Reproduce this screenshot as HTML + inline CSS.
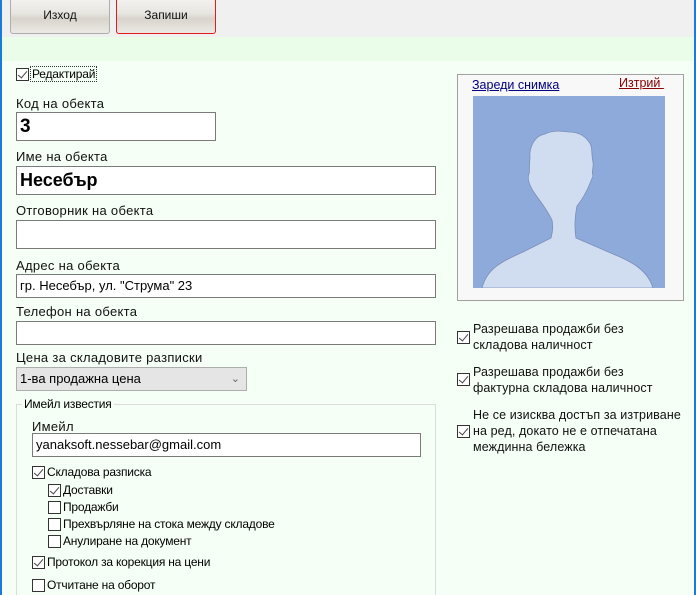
<!DOCTYPE html>
<html><head><meta charset="utf-8"><style>
*{box-sizing:border-box;margin:0;padding:0}
html,body{width:696px;height:595px;overflow:hidden}
body{background:#f5fff5;font-family:"Liberation Sans",sans-serif;font-size:13px;color:#000;position:relative}
.a{position:absolute}
.top{left:0;top:0;width:696px;height:37px;background:#f0f0f0}
.grn{left:0;top:37px;width:696px;height:24px;background:#e9fde9}
.bl{top:0;width:2px;height:595px;background:#1e7ad8}
.btn{top:-4px;height:38px;width:100px;border:1px solid #adadad;border-radius:3px;background:linear-gradient(#f4f3f1,#e8e6e1 45%,#d8d4cc 60%,#ebe9e4);text-align:center;line-height:36px;font-size:12px;color:#111}
.lbl{font-size:13px;color:#111;letter-spacing:.3px}
.in{background:#fff;border:1px solid #7a7a7a;height:29px;padding-left:3px}
.cb{width:13px;height:13px;border:1px solid #333;background:#fff}
.cb.c::after{content:"";position:absolute;left:3px;top:0px;width:4px;height:8px;border:solid #444;border-width:0 1.5px 1.5px 0;transform:rotate(40deg)}
.s{font-size:12px;letter-spacing:-.2px}
.r{font-size:12.5px;color:#111;line-height:16px;letter-spacing:.1px}
</style></head><body>
<div class="a top"></div>
<div class="a grn"></div>
<div class="a bl" style="left:0"></div>
<div class="a bl" style="left:694px"></div>
<div class="a btn" style="left:10px">Изход</div>
<div class="a btn" style="left:116px;border-color:#e31b1b">Запиши</div>

<div class="a cb c" style="left:16px;top:68px"></div>
<div class="a s" style="left:31px;top:67px;outline:1px dotted #333;padding:0 1px">Редактирай</div>

<div class="a lbl" style="left:16px;top:96px">Код на обекта</div>
<div class="a in" style="left:16px;top:112px;width:200px;font-size:19px;font-weight:bold;line-height:27px">3</div>
<div class="a lbl" style="left:16px;top:149px">Име на обекта</div>
<div class="a in" style="left:16px;top:166px;width:420px;font-size:18px;font-weight:bold;line-height:27px">Несебър</div>
<div class="a lbl" style="left:16px;top:203px">Отговорник на обекта</div>
<div class="a in" style="left:16px;top:220px;width:420px"></div>
<div class="a lbl" style="left:16px;top:258px">Адрес на обекта</div>
<div class="a in" style="left:16px;top:274px;width:420px;height:24px;line-height:22px">гр. Несебър, ул. "Струма" 23</div>
<div class="a lbl" style="left:16px;top:304px">Телефон на обекта</div>
<div class="a in" style="left:16px;top:321px;width:420px;height:24px"></div>
<div class="a lbl" style="left:16px;top:350px">Цена за складовите разписки</div>
<div class="a" style="left:16px;top:367px;width:231px;height:24px;background:#e5e5e5;border:1px solid #adadad;padding-left:3px;line-height:22px">1-ва продажна цена<span style="position:absolute;right:6px;top:0;color:#666;font-size:11px">&#8964;</span></div>

<div class="a" style="left:16px;top:404px;width:420px;height:195px;border:1px solid #dcdcdc"></div>
<div class="a s" style="left:22px;top:397px;background:#f5fff5;padding:0 2px">Имейл известия</div>
<div class="a lbl" style="left:32px;top:419px">Имейл</div>
<div class="a in" style="left:32px;top:433px;width:389px;height:24px;line-height:22px">yanaksoft.nessebar@gmail.com</div>
<div class="a cb c" style="left:32px;top:466px"></div><div class="a s" style="left:47px;top:465px">Складова разписка</div>
<div class="a cb c" style="left:48px;top:484px"></div><div class="a s" style="left:63px;top:483px">Доставки</div>
<div class="a cb" style="left:48px;top:501px"></div><div class="a s" style="left:63px;top:500px">Продажби</div>
<div class="a cb" style="left:48px;top:518px"></div><div class="a s" style="left:63px;top:517px">Прехвърляне на стока между складове</div>
<div class="a cb" style="left:48px;top:535px"></div><div class="a s" style="left:63px;top:534px">Анулиране на документ</div>
<div class="a cb c" style="left:32px;top:556px"></div><div class="a s" style="left:47px;top:555px">Протокол за корекция на цени</div>
<div class="a cb" style="left:32px;top:579px"></div><div class="a s" style="left:47px;top:578px">Отчитане на оборот</div>

<div class="a" style="left:457px;top:74px;width:227px;height:227px;background:#f8f8f8;border:1px solid #a0a0a0"></div>
<div class="a" style="left:472px;top:78px;color:#000080;text-decoration:underline;font-size:12.5px">Зареди снимка</div>
<div class="a" style="left:619px;top:76px;color:#8b0000;text-decoration:underline;font-size:12.5px">Изтрий&nbsp;</div>
<svg class="a" style="left:473px;top:96px" width="192" height="192" viewBox="0 0 192 192">
<rect width="192" height="192" fill="#8eaadb"/>
<path d="M9 192 C14 172 30 165 50 156 L78 142 C80 134 80 130 79 124 C72 110 66 104 60 95 C56 88 54 82 56 78 C57 74 56 70 57 62 C56 54 60 40 72 38 C80 34 88 35 96 36 C106 36 112 40 116 46 C120 50 118 58 120 66 C121 72 118 76 120 80 C116 90 112 100 104 110 C102 120 101 130 103 142 L140 158 C160 166 175 175 180 192 Z" fill="#d0dcf0" stroke="#7a8fb8" stroke-width="0.8"/>
</svg>

<div class="a cb c" style="left:457px;top:331px"></div>
<div class="a r" style="left:473px;top:321px">Разрешава продажби без<br>складова наличност</div>
<div class="a cb c" style="left:457px;top:373px"></div>
<div class="a r" style="left:473px;top:364px">Разрешава продажби без<br>фактурна складова наличност</div>
<div class="a cb c" style="left:457px;top:425px"></div>
<div class="a r" style="left:473px;top:407px">Не се изисква достъп за изтриване<br>на ред, докато не е отпечатана<br>междинна бележка</div>
</body></html>
